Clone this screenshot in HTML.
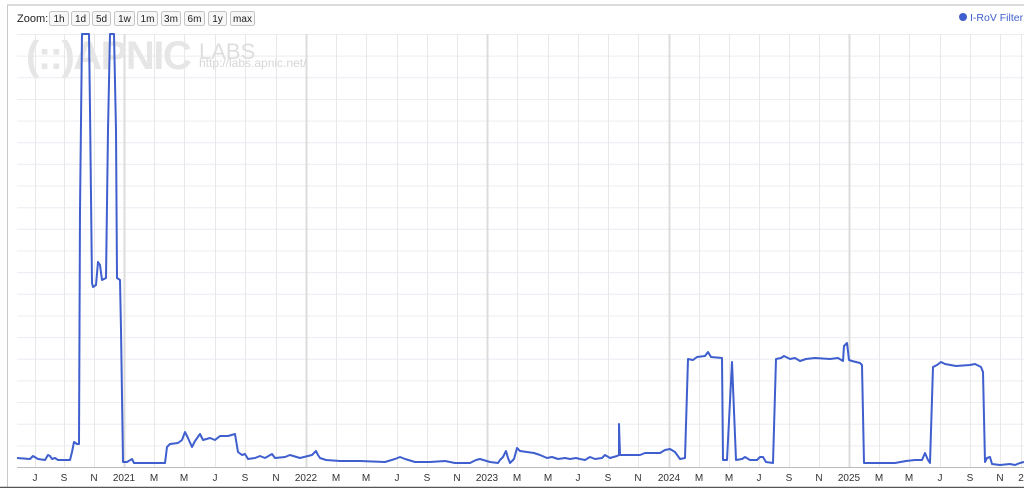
<!DOCTYPE html>
<html><head><meta charset="utf-8"><style>
html,body{margin:0;padding:0;background:#fff;width:1024px;height:488px;overflow:hidden;font-family:"Liberation Sans",sans-serif}
</style></head><body>
<svg width="1024" height="488" viewBox="0 0 1024 488" xmlns="http://www.w3.org/2000/svg" font-family="Liberation Sans, sans-serif">
<rect x="0" y="0" width="1024" height="488" fill="#fff"/>
<line x1="7" y1="5" x2="1024" y2="5" stroke="#d0d0d0" stroke-width="1.5"/>
<line x1="7.5" y1="5" x2="7.5" y2="488" stroke="#c8c8c8" stroke-width="1"/>
<line x1="0" y1="487.5" x2="1024" y2="487.5" stroke="#555" stroke-width="1.5"/>
<g id="hg" stroke="#ececf3" stroke-width="1"></g>
<g id="vg" stroke="#e6e6e6" stroke-width="1"></g>
<g font-weight="bold">
<text x="26" y="69" font-size="40" letter-spacing="-1.5" fill="#e6e6e6">(::)APNIC</text>
<text x="199" y="59" font-size="22" font-weight="normal" fill="#dedede">LABS</text>
<text x="199" y="67" font-size="12" font-weight="normal" fill="#d6d6d6">http://labs.apnic.net/</text>
</g>
<line x1="17" y1="467.5" x2="1024" y2="467.5" stroke="#bbb" stroke-width="1"/>
<polyline fill="none" stroke="#3f5fce" stroke-width="2" stroke-linejoin="round" points="17,458 30,459 33,456 38,459 45,460 48,455 50,456 52,459 55,458 58,460 62,460 70,460 72,452 74,442 77,444 79,444 80,210 82,34 89,34 90,110 92,283 93,287 96,285 98,262 100,265 102,280 106,278 108,130 110,34 114,34 116,130 117,278 120,280 121,330 123,462 127,462 132,459 134,463 165,463 167,447 170,444 178,443 182,440 185,432 188,438 192,447 195,441 200,434 203,440 210,438 215,440 220,436 228,436 235,434 238,452 242,455 245,454 248,459 255,458 260,456 265,458 272,454 275,458 285,457 290,455 300,458 312,455 316,451 318,455 320,458 326,460 340,461 360,461 385,462 395,459 400,457 405,459 415,462 430,462 445,461 455,463 470,463 476,460 480,459 490,462 498,463 500,460 503,457 506,451 508,458 510,463 514,459 517,448 520,451 527,452 534,453 540,455 547,458 552,457 558,459 565,458 570,459 576,458 580,459 585,460 590,457 595,459 602,458 605,455 610,458 617,456 619,455 619,424 620,455 640,455 645,453 660,453 665,450 670,449 675,452 680,459 685,458 688,359 693,360 697,357 705,356 708,352 711,357 722,358 723,460 727,460 732,362 736,460 742,459 745,457 750,460 757,460 760,457 763,457 766,462 773,463 776,359 781,358 784,356 790,359 795,358 800,361 806,359 815,358 830,359 838,358 843,361 844,346 847,343 849,360 852,361 860,363 862,365 864,463 880,463 895,463 906,461 915,460 922,460 925,453 928,460 930,463 933,367 937,365 941,362 945,364 956,366 970,365 975,364 981,367 983,372 985,462 987,458 990,457 992,464 1000,465 1010,464 1015,465 1020,463 1024,462"/>
<g font-size="10" fill="#333" text-anchor="middle" id="lbl"></g>
<text x="17" y="22" font-size="11" fill="#222">Zoom:</text>
<g id="btns" font-size="10" fill="#222" text-anchor="middle"></g>
<circle cx="963" cy="17" r="4" fill="#3f5fce"/>
<text x="970" y="21" font-size="10.5" fill="#3f5fce">I-RoV Filter</text>
</svg>
<script>
var ns="http://www.w3.org/2000/svg";
function el(p,t,a,txt){var e=document.createElementNS(ns,t);for(var k in a)e.setAttribute(k,a[k]);if(txt)e.textContent=txt;p.appendChild(e);return e;}
var hg=document.getElementById('hg');
for(var i=0;i<20;i++){var y=34.5+i*21.65;el(hg,'line',{x1:17,y1:y,x2:1024,y2:y});}
var vg=document.getElementById('vg'),lbl=document.getElementById('lbl');
var labs=[[35,'J'],[64,'S'],[94,'N'],[124,'2021'],[154,'M'],[184,'M'],[215,'J'],[245,'S'],[276,'N'],[306,'2022'],[336,'M'],[366,'M'],[397,'J'],[427,'S'],[457,'N'],[487,'2023'],[517,'M'],[548,'M'],[578,'J'],[608,'S'],[638,'N'],[669,'2024'],[699,'M'],[729,'M'],[759,'J'],[789,'S'],[819,'N'],[849,'2025'],[879,'M'],[909,'M'],[940,'J'],[970,'S'],[1000,'N'],[1021,'2']];
labs.forEach(function(l){var yr=l[1].length>1;var x=Math.round(l[0])+0.5;
el(vg,'line',{x1:x,y1:34,x2:x,y2:467,stroke:yr?'#dcdcdc':'#e8e8e8','stroke-width':yr?2:1});
el(lbl,'text',{x:l[0],y:481},l[1]);});
var b=document.getElementById('btns');
[[49,68,'1h'],[71,89,'1d'],[92,110,'5d'],[114,134,'1w'],[137,157,'1m'],[161,180,'3m'],[184,204,'6m'],[208,226,'1y'],[230,254,'max']].forEach(function(t){
el(b,'rect',{x:t[0]+.5,y:11.5,width:t[1]-t[0],height:14,rx:2,fill:'#f7f7f7',stroke:'#c4c4c4'});
el(b,'text',{x:(t[0]+t[1])/2+.5,y:22},t[2]);});
</script>
</body></html>
